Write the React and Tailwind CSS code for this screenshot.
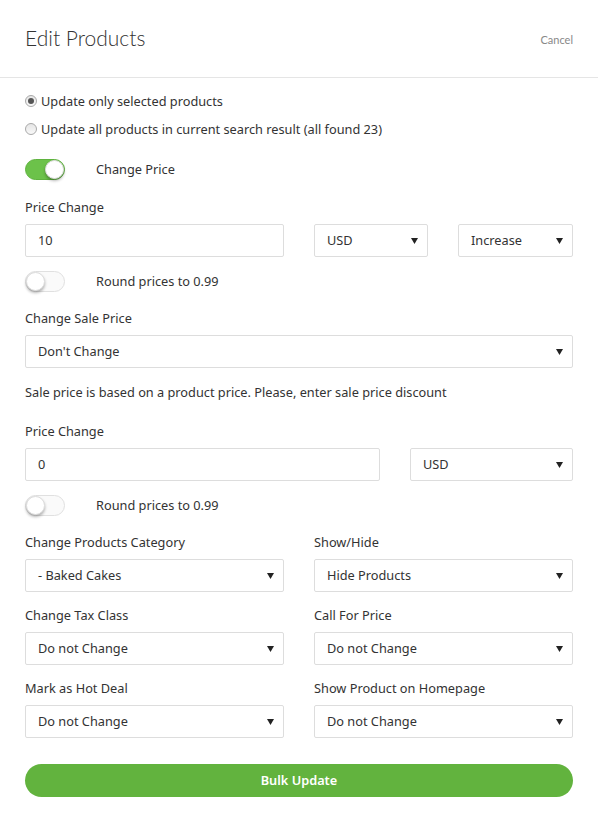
import React, { useState } from 'react';

const font = { fontFamily: '"Noto Sans", Lato, sans-serif' };

const Toggle = ({ on, onChange }) => (
  <button
    type="button"
    onClick={onChange}
    className={`relative w-[40px] h-[21px] rounded-full border shrink-0 ${
      on ? 'bg-[#6cc24a] border-[#5fb33f]' : 'bg-[#fafafa] border-[#e0e0e0]'
    }`}
  >
    <span
      className={`absolute top-[0px] w-[19px] h-[19px] rounded-full bg-white border border-[#ddd] shadow-[0_2px_3px_rgba(0,0,0,0.3)] ${
        on ? 'left-[19px]' : 'left-[0px]'
      }`}
    />
  </button>
);

const Radio = ({ checked, label, onClick }) => (
  <label className="flex items-center gap-[4px] cursor-pointer leading-[20px]" onClick={onClick}>
    <span className="w-[12px] h-[12px] rounded-full border border-[#a9a9a9] bg-gradient-to-b from-[#e6e6e6] to-[#f8f8f8] flex items-center justify-center">
      {checked && <span className="w-[6px] h-[6px] rounded-full bg-[#555]" />}
    </span>
    <span className="text-[12.75px] text-[#333]">{label}</span>
  </label>
);

const Select = ({ value }) => (
  <div className="h-[33px] border border-[#ddd] rounded-[2px] bg-white flex items-center justify-between pl-[12px] pr-[9px] text-[12.75px] text-[#333]">
    <span>{value}</span>
    <svg width="7" height="7" viewBox="0 0 7 7">
      <path d="M0 1 H7 L3.5 7 Z" fill="#222" />
    </svg>
  </div>
);

const Input = ({ value }) => (
  <div className="h-[33px] border border-[#ddd] rounded-[2px] bg-white flex items-center px-[12px] text-[12.75px] text-[#333]">
    {value}
  </div>
);

const Label = ({ children }) => (
  <div className="text-[12.75px] text-[#333] mb-[8px] leading-[18px]">{children}</div>
);

export default function App() {
  const [mode, setMode] = useState('selected');
  const [changePrice, setChangePrice] = useState(true);
  const [round1, setRound1] = useState(false);
  const [round2, setRound2] = useState(false);

  return (
    <div className="w-[598px] min-h-[823px] bg-white" style={font}>
      <div className="flex items-center justify-between px-[25px] h-[78px] border-b border-[#e5e5e5]">
        <h1
          className="text-[21px] font-light text-[#333] -mt-[2px]"
          style={{ fontFamily: 'Lato, sans-serif' }}
        >
          Edit Products
        </h1>
        <button className="text-[11px] text-[#888] mt-[4px]" style={{ fontFamily: 'Lato, sans-serif' }}>
          Cancel
        </button>
      </div>

      <div className="px-[25px] pt-[13px]">
        <div className="flex flex-col gap-[8px]">
          <Radio
            checked={mode === 'selected'}
            label="Update only selected products"
            onClick={() => setMode('selected')}
          />
          <Radio
            checked={mode === 'all'}
            label="Update all products in current search result (all found 23)"
            onClick={() => setMode('all')}
          />
        </div>

        <div className="flex items-center mt-[20px]">
          <Toggle on={changePrice} onChange={() => setChangePrice(!changePrice)} />
          <span className="ml-[31px] text-[12.75px] text-[#333]">Change Price</span>
        </div>

        <div className="mt-[18px]">
          <Label>Price Change</Label>
          <div className="grid grid-cols-[259px_114px_115px] gap-[30px]">
            <Input value="10" />
            <Select value="USD" />
            <Select value="Increase" />
          </div>
        </div>

        <div className="flex items-center mt-[14px]">
          <Toggle on={round1} onChange={() => setRound1(!round1)} />
          <span className="ml-[31px] text-[12.75px] text-[#333]">Round prices to 0.99</span>
        </div>

        <div className="mt-[17px]">
          <Label>Change Sale Price</Label>
          <Select value="Don't Change" />
        </div>

        <p className="mt-[15px] text-[12.75px] text-[#333] leading-[18px]">
          Sale price is based on a product price. Please, enter sale price discount
        </p>

        <div className="mt-[21px]">
          <Label>Price Change</Label>
          <div className="grid grid-cols-[355px_163px] gap-[30px]">
            <Input value="0" />
            <Select value="USD" />
          </div>
        </div>

        <div className="flex items-center mt-[14px]">
          <Toggle on={round2} onChange={() => setRound2(!round2)} />
          <span className="ml-[31px] text-[12.75px] text-[#333]">Round prices to 0.99</span>
        </div>

        <div className="grid grid-cols-2 gap-x-[30px] gap-y-[14px] mt-[17px]">
          <div>
            <Label>Change Products Category</Label>
            <Select value="- Baked Cakes" />
          </div>
          <div>
            <Label>Show/Hide</Label>
            <Select value="Hide Products" />
          </div>
          <div>
            <Label>Change Tax Class</Label>
            <Select value="Do not Change" />
          </div>
          <div>
            <Label>Call For Price</Label>
            <Select value="Do not Change" />
          </div>
          <div>
            <Label>Mark as Hot Deal</Label>
            <Select value="Do not Change" />
          </div>
          <div>
            <Label>Show Product on Homepage</Label>
            <Select value="Do not Change" />
          </div>
        </div>

        <button className="mt-[26px] w-full h-[33px] rounded-full bg-[#62b33e] text-white text-[12.75px] font-semibold">
          Bulk Update
        </button>
      </div>
    </div>
  );
}
